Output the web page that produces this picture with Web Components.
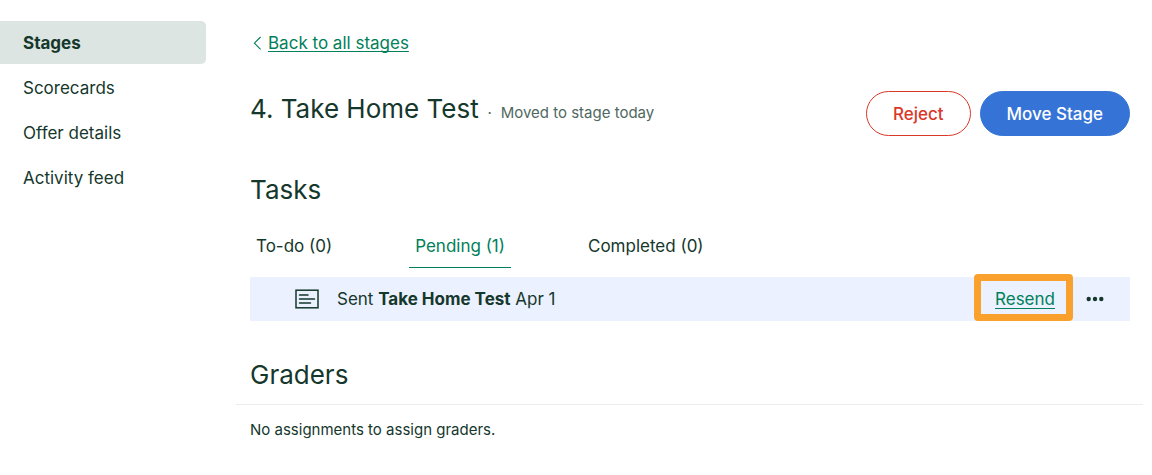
<!DOCTYPE html>
<html lang="en">
<head>
<meta charset="utf-8">
<meta name="viewport" content="width=device-width, initial-scale=1">
<title>Take Home Test</title>
<style>
body { margin: 0; background: #fff; }
</style>
</head>
<body>
<candidate-page></candidate-page>

<template id="page-template">
  <style>
    :host {
      display: grid; grid-template-columns: 206px minmax(0, 1fr); column-gap: 44px;
      padding: 21px 22px 24px 0;
      font-family: Inter, "Liberation Sans", sans-serif; font-size: 17px; line-height: 24px;
      color: #15372c;
      --green: #00805a; --red: #d93829; --blue: #3574d6; --muted: #4f695f;
    }
    main { display: block; }
  </style>
  <side-nav>
    <nav-item href="#stages" current>Stages</nav-item>
    <nav-item href="#scorecards">Scorecards</nav-item>
    <nav-item href="#offer">Offer details</nav-item>
    <nav-item href="#activity">Activity feed</nav-item>
  </side-nav>
  <main>
    <back-link href="#all">Back to all stages</back-link>
    <stage-header note="Moved to stage today">
      4. Take Home Test
      <pill-button slot="actions" kind="danger">Reject</pill-button>
      <pill-button slot="actions" kind="primary">Move Stage</pill-button>
    </stage-header>
    <section-title>Tasks</section-title>
    <task-tabs></task-tabs>
    <task-row>Sent <b>Take Home Test</b> Apr 1</task-row>
    <graders-panel>No assignments to assign graders.</graders-panel>
  </main>
</template>

<script>
function define(name, html, setup) {
  customElements.define(name, class extends HTMLElement {
    constructor() {
      super();
      this.attachShadow({ mode: 'open' }).innerHTML = html;
    }
    connectedCallback() { if (setup) setup(this, this.shadowRoot); }
  });
}

define('side-nav', `
  <style>
    :host { display: block; }
    nav { display: flex; flex-direction: column; gap: 2px; }
  </style>
  <nav aria-label="Candidate"><slot></slot></nav>`);

define('nav-item', `
  <style>
    :host { display: block; }
    a { display: block; padding: 10px 23px 9px; line-height: 24px; border-radius: 0 5px 5px 0;
        color: inherit; text-decoration: none; }
    :host([current]) a { background: #dce5e1; font-weight: 700; }
  </style>
  <a><slot></slot></a>`, (el, root) => {
  const a = root.querySelector('a');
  a.href = el.getAttribute('href');
  if (el.hasAttribute('current')) a.setAttribute('aria-current', 'page');
});

define('back-link', `
  <style>
    :host { display: flex; align-items: center; gap: 6px; padding: 10px 0 0 3px; color: var(--green); }
    a { color: inherit; text-decoration-thickness: 1px; text-underline-offset: 2px; text-decoration-skip-ink: none; }
    svg { display: block; }
  </style>
  <svg width="9" height="14" viewBox="0 0 9 14" fill="none" stroke="currentColor" stroke-width="1.1" aria-hidden="true"><path d="M7.6 1 1.4 7.2 7.6 13.4"/></svg>
  <a><slot></slot></a>`, (el, root) => {
  root.querySelector('a').href = el.getAttribute('href');
});

define('stage-header', `
  <style>
    :host { display: flex; align-items: center; justify-content: space-between; margin-top: 36px; }
    .text { display: flex; align-items: baseline; padding-bottom: 9px; }
    h1 { margin: 0; font-size: 26px; font-weight: 400; line-height: 36px; }
    .dot { width: 22px; text-align: center; }
    .dot, .note { font-size: 15px; color: var(--muted); }
    .actions { display: flex; gap: 9px; }
  </style>
  <div class="text"><h1><slot></slot></h1><span class="dot">·</span><span class="note"></span></div>
  <div class="actions"><slot name="actions"></slot></div>`, (el, root) => {
  root.querySelector('.note').textContent = el.getAttribute('note');
});

define('pill-button', `
  <style>
    :host { display: block; }
    button { display: block; height: 45px; padding: 0 26px; border: 1px solid var(--blue); border-radius: 23px;
      font: inherit; font-weight: 500; background: var(--blue); color: #fff; cursor: pointer; }
    :host([kind="danger"]) button { background: #fff; color: var(--red); border-color: var(--red); }
  </style>
  <button type="button"><slot></slot></button>`);

define('section-title', `
  <style>
    :host { display: block; margin-top: 36px; }
    h2 { margin: 0; font-size: 26px; font-weight: 400; line-height: 36px; }
  </style>
  <h2><slot></slot></h2>`);

define('task-tabs', `
  <style>
    :host { display: block; margin-top: 20px; }
    div { display: flex; gap: 71px; }
    button { padding: 6px 6px 9px; border: 0; border-bottom: 1px solid transparent; background: none;
      font: inherit; line-height: 24px; color: inherit; cursor: pointer; height: 40px; }
    button[aria-selected="true"] { color: var(--green); border-color: var(--green); }
  </style>
  <div role="tablist" aria-label="Tasks">
    <button type="button" role="tab" aria-selected="false">To-do (0)</button>
    <button type="button" role="tab" aria-selected="true">Pending (1)</button>
    <button type="button" role="tab" aria-selected="false">Completed (0)</button>
  </div>`);

define('task-row', `
  <style>
    :host { display: flex; align-items: center; height: 44px; margin-top: 9px; padding: 0 25px 0 45px; background: #ebf1fe; }
    svg { display: block; flex: none; }
    .text { margin-left: 18px; flex: 1; }
    .resend { position: relative; color: var(--green); text-decoration-thickness: 1px; text-underline-offset: 3px; }
    .resend::after { content: ""; position: absolute; inset: -13px -18px -10px -21px; border: 7px solid #faa02d; border-radius: 4px; pointer-events: none; }
    .more { margin-left: 30px; padding: 0; border: 0; background: none; color: inherit; cursor: pointer; }
  </style>
  <svg width="24" height="20" viewBox="0 0 24 20" fill="none" stroke="currentColor" stroke-width="1.5" aria-hidden="true">
    <rect x="1" y="1.2" width="22" height="17.6"/><path d="M4.5 6H13M4.5 10H19.5M4.5 14H15.5" stroke-linecap="round"/>
  </svg>
  <span class="text"><slot></slot></span>
  <a class="resend" href="#resend">Resend</a>
  <button class="more" type="button" aria-label="More actions">
    <svg width="20" height="20" viewBox="0 0 20 20" fill="currentColor"><circle cx="3.7" cy="10" r="2.2"/><circle cx="10" cy="10" r="2.2"/><circle cx="16.3" cy="10" r="2.2"/></svg>
  </button>`);

define('graders-panel', `
  <style>
    :host { display: block; margin-top: 36px; }
    h2 { margin: 0; font-size: 26px; font-weight: 400; line-height: 36px; }
    hr { margin: 11px -13px 0 -14px; border: 0; border-top: 1px solid #ededed; }
    p { margin: 13px 0 0; font-size: 15px; line-height: 24px; }
  </style>
  <h2>Graders</h2>
  <hr>
  <p><slot></slot></p>`);

customElements.define('candidate-page', class extends HTMLElement {
  constructor() {
    super();
    this.attachShadow({ mode: 'open' })
      .append(document.getElementById('page-template').content.cloneNode(true));
  }
});
</script>
</body>
</html>
